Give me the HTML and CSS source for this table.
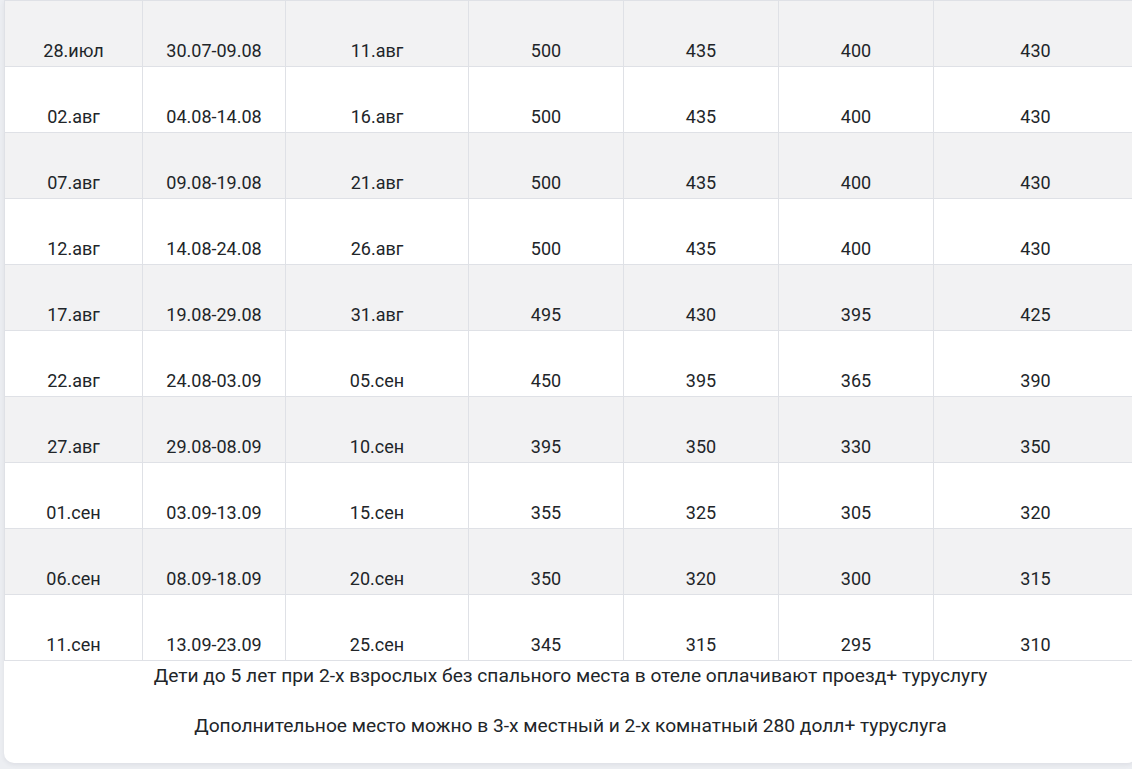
FILE: index.html
```html
<!DOCTYPE html>
<html lang="ru">
<head>
<meta charset="utf-8">
<title>Цены</title>
<link rel="stylesheet" href="styles.css">
</head>
<body>
<div class="card">
  <table class="prices">
    <colgroup>
      <col class="c1"><col class="c2"><col class="c3"><col class="c4"><col class="c5"><col class="c6"><col class="c7">
    </colgroup>
    <tbody>
      <tr class="alt"><td>28.июл</td><td>30.07-09.08</td><td>11.авг</td><td>500</td><td>435</td><td>400</td><td>430</td></tr>
      <tr><td>02.авг</td><td>04.08-14.08</td><td>16.авг</td><td>500</td><td>435</td><td>400</td><td>430</td></tr>
      <tr class="alt"><td>07.авг</td><td>09.08-19.08</td><td>21.авг</td><td>500</td><td>435</td><td>400</td><td>430</td></tr>
      <tr><td>12.авг</td><td>14.08-24.08</td><td>26.авг</td><td>500</td><td>435</td><td>400</td><td>430</td></tr>
      <tr class="alt"><td>17.авг</td><td>19.08-29.08</td><td>31.авг</td><td>495</td><td>430</td><td>395</td><td>425</td></tr>
      <tr><td>22.авг</td><td>24.08-03.09</td><td>05.сен</td><td>450</td><td>395</td><td>365</td><td>390</td></tr>
      <tr class="alt"><td>27.авг</td><td>29.08-08.09</td><td>10.сен</td><td>395</td><td>350</td><td>330</td><td>350</td></tr>
      <tr><td>01.сен</td><td>03.09-13.09</td><td>15.сен</td><td>355</td><td>325</td><td>305</td><td>320</td></tr>
      <tr class="alt"><td>06.сен</td><td>08.09-18.09</td><td>20.сен</td><td>350</td><td>320</td><td>300</td><td>315</td></tr>
      <tr><td>11.сен</td><td>13.09-23.09</td><td>25.сен</td><td>345</td><td>315</td><td>295</td><td>310</td></tr>
    </tbody>
  </table>
  <div class="notes">
    <p>Дети до 5 лет при 2-х взрослых без спального места в отеле оплачивают проезд+ туруслугу</p>
    <p>Дополнительное место можно в 3-х местный и 2-х комнатный 280 долл+ туруслуга</p>
  </div>
</div>
</body>
</html>
```
FILE: styles.css
```css
html, body {
  margin: 0;
  padding: 0;
  overflow: hidden;
  background: #eceef2;
}
body {
  font-family: Roboto, "Liberation Sans", Arial, sans-serif;
  font-size: 18px;
  color: #212529;
  width: 1132px;
  height: 769px;
}
.card {
  margin-left: 4px;
  width: 1133px;
  background: #ffffff;
  border-radius: 0 0 10px 10px;
  box-shadow: 0 2px 4px rgba(60, 70, 90, 0.08);
}
.prices {
  border-collapse: collapse;
  table-layout: fixed;
  width: 1133px;
}
.c1 { width: 138px; }
.c2 { width: 143px; }
.c3 { width: 183px; }
.c4 { width: 155px; }
.c5 { width: 155px; }
.c6 { width: 155px; }
.c7 { width: 204px; }
.prices td {
  border: 1px solid #dfe1e6;
  text-align: center;
  padding: 36px 4px 2px;
  line-height: 27px;
  white-space: nowrap;
}
.prices tr.alt td {
  background: #f2f2f3;
}
.notes {
  text-align: center;
  font-size: 19.2px;
  padding: 3px 0 25px;
}
.notes p {
  margin: 0;
  line-height: 24px;
}
.notes p + p {
  margin-top: 26px;
}
```
